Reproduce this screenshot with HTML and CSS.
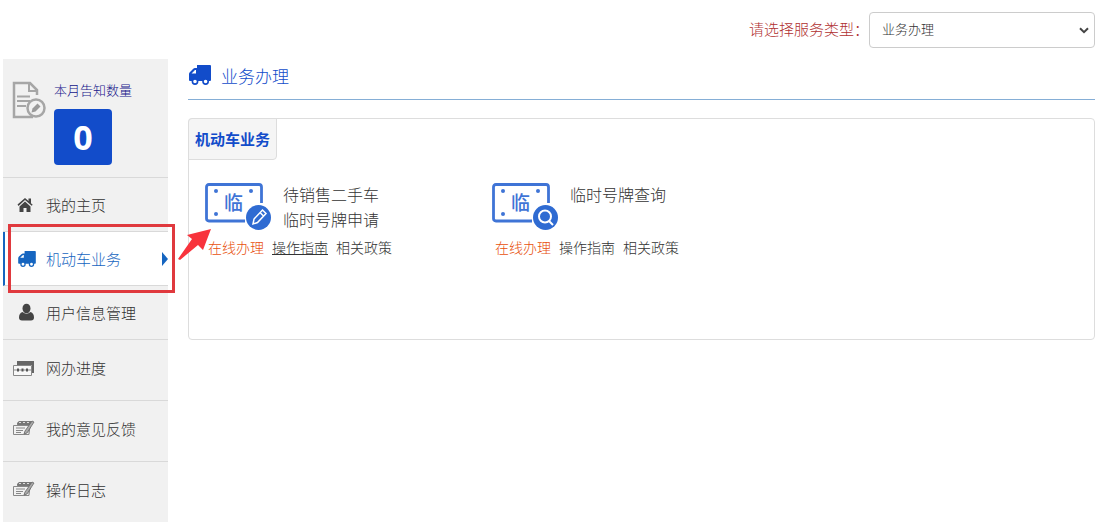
FILE: index.html
```html
<!DOCTYPE html>
<html lang="zh-CN">
<head>
<meta charset="UTF-8">
<meta name="viewport" content="width=device-width, initial-scale=1.0">
<title>业务办理</title>
<link rel="stylesheet" href="styles.css">
</head>
<body>

<svg class="symbols" aria-hidden="true">
    <symbol id="truck" viewBox="0 0 22 20">
        <path fill="currentColor" fill-rule="evenodd" d="M8 0h13q1 0 1 1v14q0 1-1 1H1q-1 0-1-1V9q0-1 1-2l3-3q1-1 2-1h2zM2.500 8.500H7V5H6z"/>
        <circle cx="6" cy="16.500" r="2.600" fill="#fff" stroke="currentColor" stroke-width="1.600"/>
        <circle cx="16.600" cy="16.500" r="2.600" fill="#fff" stroke="currentColor" stroke-width="1.600"/>
    </symbol>
    <symbol id="note" viewBox="0 0 24 20">
        <path d="M4 4 6 2h13l-3 13H5z" fill="#777"/>
        <path d="M0.500 6.500H16v9H0.500z" fill="#f1f1f1" stroke="#888"/>
        <path d="M3 9h9M3 11.500h7M3 13.500h5" stroke="#888"/>
        <path d="M19 2 12 12l-1 3 3-1 7-11z" fill="#aaa" stroke="#666" stroke-width="0.800"/>
        <path d="M6 3.500h2M10 3.500h2M14 3.500h2" stroke="#ddd"/>
    </symbol>
    <symbol id="plate" viewBox="0 0 66 48">
        <path d="M40 38H4q-2.500 0-2.500-2.500V4q0-2.500 2.500-2.500h50q2.500 0 2.500 2.500v16" fill="none" stroke="#3f74d6" stroke-width="2.800"/>
        <circle cx="11" cy="8" r="2" fill="#3f74d6"/>
        <circle cx="46" cy="8" r="2" fill="#3f74d6"/>
        <circle cx="11" cy="31" r="2" fill="#3f74d6"/>
        <circle cx="53.500" cy="34.500" r="12.500" fill="#2f6bd2"/>
    </symbol>
</svg>

<div class="topbar">
    <label for="service">请选择服务类型：</label>
    <div class="select-box">
        <select id="service">
            <option>业务办理</option>
        </select>
        <svg class="chevron" viewBox="0 0 10 7"><path d="M1 1.200 5 5.200 9 1.200" fill="none" stroke="#444" stroke-width="2"/></svg>
    </div>
</div>

<div class="page">
    <div class="sidebar">
        <div class="notice">
            <svg class="notice-icon" viewBox="0 0 34 38">
                <path d="M25 14V9l-7-7H2v34h19" fill="none" stroke="#a6a6a6" stroke-width="2.500"/>
                <path d="M17 2v8h8" fill="none" stroke="#a6a6a6" stroke-width="2"/>
                <path d="M5 15.500h13M5 20h13M5 25h9" stroke="#a6a6a6" stroke-width="2"/>
                <circle cx="24" cy="27" r="8.500" fill="#f1f1f1" stroke="#a6a6a6" stroke-width="2.500"/>
                <path d="m19.500 31.500 1-4 5-5 3 3-5 5z" fill="#999"/>
            </svg>
            <div class="notice-info">
                <div class="notice-label">本月告知数量</div>
                <div class="notice-count">0</div>
            </div>
        </div>
        <nav class="menu">
            <a class="menu-item" href="#">
                <svg class="menu-icon" viewBox="0 0 24 20"><path d="M4.500 9.600 12 3l3.500 3V3.500H18v4.700l1.700 1.500-1 1.100L12 5l-6.500 6z" fill="#444"/><path d="m6.500 11.400 5.500-4.800 5.500 4.800V17h-4v-4h-3v4h-4z" fill="#444"/></svg>
                我的主页
            </a>
            <a class="menu-item active" href="#">
                <svg class="menu-icon" viewBox="0 0 24 20"><use href="#truck" x="5" y="2" width="18" height="16"/></svg>
                机动车业务
            </a>
            <a class="menu-item" href="#">
                <svg class="menu-icon" viewBox="0 0 24 20"><ellipse cx="13.500" cy="5.500" rx="4" ry="4.800" fill="#444"/><path d="M9.500 9q4 3.600 8 0 3.500 1 3.500 5.500 0 3-3 3H9q-3 0-3-3Q6 10 9.500 9z" fill="#444"/></svg>
                用户信息管理
            </a>
            <a class="menu-item tall" href="#">
                <svg class="menu-icon" viewBox="0 0 24 20"><path d="M4 3h17v12h-2V7H4z" fill="#666"/><path d="M0.500 7.500h18v10h-18z" fill="#f8f8f8" stroke="#888"/><path d="M0 12h19" stroke="#888"/><path d="M4 12h2M8.500 12h2M13 12h2" stroke="#555" stroke-width="3"/></svg>
                网办进度
            </a>
            <a class="menu-item tall" href="#">
                <svg class="menu-icon"><use href="#note"/></svg>
                我的意见反馈
            </a>
            <a class="menu-item tall" href="#">
                <svg class="menu-icon"><use href="#note"/></svg>
                操作日志
            </a>
        </nav>
        <!-- step marker around the active menu item -->
        <div class="marker"></div>
        <svg class="marker-arrow" viewBox="0 0 36 34"><path d="M37 1 29 22l-5-5L6 32 4 31 18 11l-5-4z" fill="#f8333c"/></svg>
    </div>

    <div class="main">
        <h1 class="title">
            <svg class="title-icon"><use href="#truck"/></svg>
            业务办理
        </h1>
        <div class="panel">
            <h2 class="tab">机动车业务</h2>
            <div class="cards">
                <div class="card">
                    <div class="card-top">
                        <div class="plate">
                            <svg viewBox="0 0 66 48"><use href="#plate"/><path d="m48 41 1-5 8.500-9 3.500 3.500-8.500 9zM55 29.500l3.500 3.500" fill="none" stroke="#fff" stroke-width="1.500"/></svg>
                            <span>临</span>
                        </div>
                        <div class="card-name">待销售二手车<br>临时号牌申请</div>
                    </div>
                    <div class="card-links">
                        <a class="online" href="#">在线办理</a>
                        <a class="current" href="#">操作指南</a>
                        <a href="#">相关政策</a>
                    </div>
                </div>
                <div class="card">
                    <div class="card-top">
                        <div class="plate">
                            <svg viewBox="0 0 66 48"><use href="#plate"/><circle cx="53" cy="33.500" r="6" fill="none" stroke="#fff" stroke-width="2"/><path d="m57 38 4 4" stroke="#fff" stroke-width="2"/></svg>
                            <span>临</span>
                        </div>
                        <div class="card-name">临时号牌查询</div>
                    </div>
                    <div class="card-links">
                        <a class="online" href="#">在线办理</a>
                        <a href="#">操作指南</a>
                        <a href="#">相关政策</a>
                    </div>
                </div>
            </div>
        </div>
    </div>
</div>

</body>
</html>
```
FILE: styles.css
```css
* {
    box-sizing: border-box;
}

body {
    margin: 0;
    background-color: #fff;
    color: #333;
    font-family: "Open Sans", "Noto Sans CJK SC", sans-serif;
    font-weight: 300;
    font-size: 15px;
}

a {
    color: inherit;
    text-decoration: none;
}

svg {
    display: block;
    flex-shrink: 0;
}

.symbols {
    position: absolute;
    width: 0;
    height: 0;
}

.topbar {
    display: flex;
    justify-content: flex-end;
    align-items: center;
    padding-top: 12px;
}

.topbar label {
    padding-bottom: 4px;
    color: #b03030;
}

.select-box {
    position: relative;
    width: 226px;
}

.select-box select {
    appearance: none;
    display: block;
    width: 100%;
    height: 36px;
    padding: 0 12px 2px;
    border: 1px solid #ccc;
    border-radius: 4px;
    background-color: #fff;
    color: #333;
    font-family: inherit;
    font-weight: inherit;
    font-size: 13px;
}

.chevron {
    position: absolute;
    top: 15px;
    right: 6px;
    width: 10px;
    height: 7px;
    pointer-events: none;
}

.page {
    display: flex;
    gap: 20px;
    padding: 11px 0 0 3px;
}

.sidebar {
    position: relative;
    flex: 0 0 165px;
    align-self: flex-start;
    background-color: #f1f1f1;
}

.notice {
    display: flex;
    gap: 8px;
    height: 119px;
    padding: 22px 0 0 9px;
    border-bottom: 1px solid #d9d9d9;
}

.notice-icon {
    width: 34px;
    height: 38px;
}

.notice-label {
    color: #14148a;
    font-size: 13px;
    line-height: 18px;
}

.notice-count {
    width: 58px;
    height: 56px;
    margin-top: 10px;
    border-radius: 4px;
    background-color: #124cca;
    color: #fff;
    font-size: 34px;
    font-weight: 700;
    line-height: 56px;
    text-align: center;
}

.menu-item {
    display: flex;
    align-items: center;
    gap: 9px;
    height: 54px;
    padding-left: 10px;
    border-bottom: 1px solid #d9d9d9;
}

.menu-item.tall {
    height: 61px;
    padding-bottom: 5px;
}

.menu-item.active {
    position: relative;
    padding-left: 8px;
    border-left: 2px solid #1565c0;
    background-color: #fff;
    color: #1565c0;
}

.menu-item.active::after {
    content: "";
    position: absolute;
    right: 0;
    border: 7px solid transparent;
    border-left: 6px solid #1565c0;
    border-right: 0;
}

.menu-icon {
    width: 24px;
    height: 20px;
}

.marker {
    position: absolute;
    top: 165px;
    left: 5px;
    width: 167px;
    height: 69px;
    border: 3px solid #e0393e;
}

.marker-arrow {
    position: absolute;
    top: 169px;
    left: 171px;
    z-index: 1;
    width: 36px;
    height: 34px;
    overflow: visible;
}

.main {
    flex: 1;
    min-width: 0;
}

.title {
    display: flex;
    align-items: center;
    gap: 10px;
    height: 41px;
    margin: 0 0 18px;
    padding: 0 0 8px 1px;
    border-bottom: 1px solid #85aed6;
    color: #124cca;
    font-size: 17px;
    font-weight: 300;
}

.title-icon {
    width: 22px;
    height: 20px;
}

.panel {
    min-height: 222px;
    border: 1px solid #ddd;
    border-radius: 4px;
}

.tab {
    width: max-content;
    margin: -1px 0 0 -1px;
    padding: 0 6px;
    border: 1px solid #ddd;
    border-radius: 4px 0 4px 0;
    background-color: #f5f5f5;
    color: #124cca;
    font-size: 15px;
    font-weight: 700;
    line-height: 40px;
}

.cards {
    display: flex;
    flex-wrap: wrap;
    padding: 23px 0 0 16px;
}

.card {
    width: 287px;
}

.card-top {
    display: flex;
    gap: 12px;
    min-height: 50px;
}

.plate {
    position: relative;
    width: 66px;
    height: 48px;
}

.plate span {
    position: absolute;
    top: 6px;
    left: 19px;
    color: #3f74d6;
    font-size: 19px;
    font-weight: 500;
    line-height: 28px;
}

.card-name {
    font-size: 16px;
    line-height: 25px;
}

.card-links {
    display: flex;
    gap: 8px;
    padding: 4px 0 0 3px;
    font-size: 14px;
    line-height: 22px;
}

.card-links .online {
    color: #e8500c;
}

.card-links .current {
    text-decoration: underline;
}
```
